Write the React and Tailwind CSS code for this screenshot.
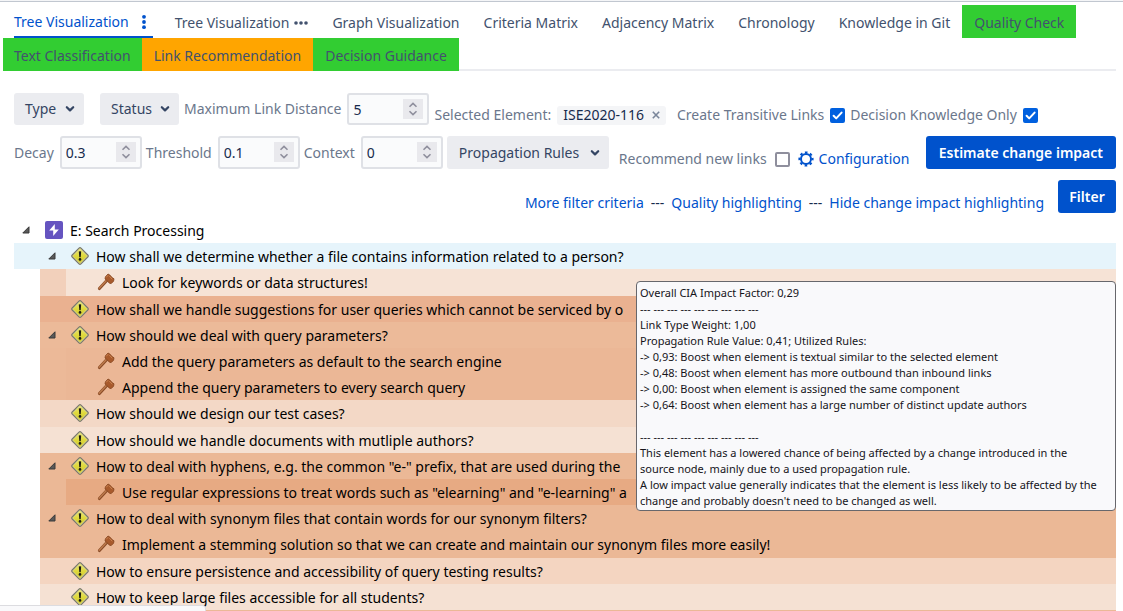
import React from "react";

const ROWS = [
  { text: "How shall we determine whether a file contains information related to a person?", open: true, selected: true },
  { text: "Look for keywords or data structures!", decision: true, outer: "bg-[#f2d0bb]", inner: "bg-[#f6e3d6]" },
  { text: "How shall we handle suggestions for user queries which cannot be serviced by o", outer: "bg-[#eab190]" },
  { text: "How should we deal with query parameters?", open: true, outer: "bg-[#ecba99]" },
  { text: "Add the query parameters as default to the search engine", decision: true, outer: "bg-[#ecb998]", inner: "bg-[#ebb796]" },
  { text: "Append the query parameters to every search query", decision: true, outer: "bg-[#ecb998]", inner: "bg-[#ebb796]" },
  { text: "How should we design our test cases?", outer: "bg-[#f3d8c6]" },
  { text: "How should we handle documents with mutliple authors?", outer: "bg-[#f5e1d3]" },
  { text: 'How to deal with hyphens, e.g. the common "e-" prefix, that are used during the', open: true, outer: "bg-[#ebb896]" },
  { text: 'Use regular expressions to treat words such as "elearning" and "e-learning" a', decision: true, outer: "bg-[#ebb896]", inner: "bg-[#e7aa83]" },
  { text: "How to deal with synonym files that contain words for our synonym filters?", open: true, outer: "bg-[#ebb896]" },
  { text: "Implement a stemming solution so that we can create and maintain our synonym files more easily!", decision: true, outer: "bg-[#ebb896]", inner: "bg-[#ebb896]" },
  { text: "How to ensure persistence and accessibility of query testing results?", outer: "bg-[#f4d5c1]" },
  { text: "How to keep large files accessible for all students?", outer: "bg-[#f5e1d3]" },
];

function Chevron() {
  return (
    <svg className="h-2 w-2.5 shrink-0" viewBox="0 0 10 8" fill="none" stroke="currentColor" strokeWidth="2.2" strokeLinecap="round" strokeLinejoin="round" aria-hidden="true">
      <path d="M1.8 2.2 5 5.4 8.2 2.2" />
    </svg>
  );
}

function Arrow() {
  return (
    <svg className="h-2 w-2 shrink-0" viewBox="0 0 8 8" aria-hidden="true">
      <path d="M7 .8V7H.8Z" fill="#595959" stroke="#3a3a3a" strokeWidth="1" />
    </svg>
  );
}

function IssueIcon() {
  return (
    <svg className="h-[18px] w-[18px] shrink-0" viewBox="0 0 18 18" aria-hidden="true">
      <defs>
        <linearGradient id="issue" x1="0" y1="0" x2="0" y2="1">
          <stop offset="0" stopColor="#ece77a" />
          <stop offset=".5" stopColor="#dfd93c" />
          <stop offset="1" stopColor="#cfc830" />
        </linearGradient>
      </defs>
      <path d="M8 1.2Q9 .2 10 1.2L16.8 8Q17.8 9 16.8 10L10 16.8Q9 17.8 8 16.8L1.2 10Q.2 9 1.2 8Z" fill="#d8d48c" stroke="#77776c" strokeWidth="1.1" />
      <path d="M9 2 16 9 9 16 2 9Z" fill="url(#issue)" />
      <path d="M7.8 4.6Q9 3.8 10.2 4.6L9.7 10.2H8.3Z" fill="#1c1c12" />
      <circle cx="9" cy="12.4" r="1.3" fill="#1c1c12" />
    </svg>
  );
}

function DecisionIcon() {
  return (
    <svg className="h-[18px] w-[18px] shrink-0" viewBox="0 0 18 18" aria-hidden="true">
      <path d="M9.8 7.4 2.4 15.6" stroke="#8a4c28" strokeWidth="3" strokeLinecap="round" />
      <path d="M9.6 7.2 2.2 15.2" stroke="#bd7a4c" strokeWidth="1.4" strokeLinecap="round" />
      <path d="M8.4 3.8 11 1 12.6 1.8 15.4 4.8 17 5.8 16.6 8.2 14.2 10.6 12.4 10.2 9.2 6.8 8 6Z" fill="#a85a2c" stroke="#84451f" strokeWidth=".8" strokeLinejoin="round" />
      <path d="M11 2.4 9.6 4M12.6 3.4 15 6" stroke="#cc8452" strokeWidth="1" strokeLinecap="round" />
    </svg>
  );
}

function EpicIcon() {
  return (
    <svg className="h-[18px] w-[18px] shrink-0" viewBox="0 0 18 18" aria-hidden="true">
      <rect width="18" height="18" rx="2" fill="#6554c0" />
      <path d="M9.8 3 4.2 9.6H8.2V15L13.8 8.4H9.8Z" fill="#fff" />
    </svg>
  );
}

function Gear() {
  return (
    <svg className="h-4 w-4 shrink-0" viewBox="0 0 16 16" fill="none" stroke="currentColor" aria-hidden="true">
      <circle cx="8" cy="8" r="5" strokeWidth="2" />
      <circle cx="8" cy="8" r="6.6" strokeWidth="2" strokeDasharray="2.6 2.584" strokeDashoffset="1.3" />
    </svg>
  );
}

function NumberField({ id, label, value }) {
  return (
    <div className="flex items-center gap-1.5">
      <label htmlFor={id} className="text-[#6b778c]">{label}</label>
      <span className="relative flex h-full w-[82px]">
        <input id={id} type="number" defaultValue={value} className="h-full w-full rounded-[3px] border-2 border-[#dfe1e6] bg-[#fafbfc] pl-1 pr-6 text-[#172b4d] outline-none [appearance:textfield]" />
        <span className="pointer-events-none absolute right-1.5 top-1.5 flex h-5 w-5 items-center justify-center bg-[#e9e9ed]">
          <svg className="h-4 w-3" viewBox="0 0 12 16" fill="none" stroke="#8f8f9d" strokeWidth="1.6" aria-hidden="true">
            <path d="M2.5 5.8 6 2.4 9.5 5.8M2.5 10.2 6 13.6 9.5 10.2" />
          </svg>
        </span>
      </span>
    </div>
  );
}

function Dropdown({ children, className }) {
  return (
    <button type="button" className={`flex items-center justify-between rounded-[3px] bg-[#ebecf0] pr-[9px] text-[#344563] ${className}`}>
      {children}
      <Chevron />
    </button>
  );
}

function CheckField({ id, label, checked, className }) {
  return (
    <div className={`flex items-center self-end ${className}`}>
      <label htmlFor={id} className="text-[#6b778c]">{label}</label>
      <span className="relative flex h-[15px] w-[15px]">
        <input id={id} type="checkbox" defaultChecked={checked} className="peer h-full w-full appearance-none rounded-[2px] border-2 border-[#8f8f9d] bg-white checked:border-[#0060df] checked:bg-[#0060df]" />
        <svg className="pointer-events-none absolute inset-0 hidden h-full w-full peer-checked:block" viewBox="0 0 15 15" fill="none" stroke="#fff" strokeWidth="2" strokeLinecap="round" strokeLinejoin="round" aria-hidden="true">
          <path d="M3.6 7.8 6.2 10.4 11.6 4.6" />
        </svg>
      </span>
    </div>
  );
}

function Tab({ children, className = "px-3 text-[#42526e]" }) {
  return (
    <a href="#" className={`flex h-[33px] items-center whitespace-nowrap pt-0.5 ${className}`}>
      {children}
    </a>
  );
}

function RowText({ children }) {
  return <span className="ml-[7px] whitespace-nowrap pt-0.5">{children}</span>;
}

function TreeRow({ row }) {
  if (row.selected) {
    return (
      <div role="treeitem" className="flex items-center bg-[#e6f4fb] pl-[34px]">
        <Arrow />
        <span className="ml-[15px]"><IssueIcon /></span>
        <RowText>{row.text}</RowText>
      </div>
    );
  }
  if (row.decision) {
    return (
      <div role="treeitem" className={`ml-[26px] flex overflow-hidden pl-[26px] ${row.outer}`}>
        <div className={`flex flex-1 items-center pl-[31px] ${row.inner}`}>
          <DecisionIcon />
          <RowText>{row.text}</RowText>
        </div>
      </div>
    );
  }
  return (
    <div role="treeitem" className={`ml-[26px] flex items-center overflow-hidden pl-2 ${row.outer}`}>
      <span className="w-2">{row.open && <Arrow />}</span>
      <span className="ml-[15px]"><IssueIcon /></span>
      <RowText>{row.text}</RowText>
    </div>
  );
}

function Tooltip() {
  return (
    <div role="tooltip" className="absolute right-0 top-[64px] w-[480px] rounded border border-[#67676c] bg-[#f9f9fb] pb-px pl-[3px] pt-[3px] text-[11px] leading-4 text-[#15141a]">
      <p>Overall CIA Impact Factor: 0,29</p>
      <p>--- --- --- --- --- --- --- --- ---</p>
      <p>Link Type Weight: 1,00</p>
      <p>Propagation Rule Value: 0,41; Utilized Rules:</p>
      <p>-&gt; 0,93: Boost when element is textual similar to the selected element</p>
      <p>-&gt; 0,48: Boost when element has more outbound than inbound links</p>
      <p>-&gt; 0,00: Boost when element is assigned the same component</p>
      <p>-&gt; 0,64: Boost when element has a large number of distinct update authors</p>
      <p className="mt-4">--- --- --- --- --- --- --- --- ---</p>
      <p>This element has a lowered chance of being affected by a change introduced in the<br />source node, mainly due to a used propagation rule.</p>
      <p className="whitespace-nowrap">A low impact value generally indicates that the element is less likely to be affected by the<br />change and probably doesn't need to be changed as well.</p>
    </div>
  );
}

export default function App() {
  return (
    <div className="h-screen overflow-hidden bg-white font-['Noto_Sans','Open_Sans',sans-serif] text-sm leading-5 text-black">
      <div className="h-0.5 border-b border-[#c1c7d0] bg-[#f4f5f7]" />
      <nav className="ml-[3px] mr-[7px] mt-[3px] flex flex-wrap border-b-2 border-[#ebecf0]">
        <Tab className="mx-[11px] border-b-2 border-[#0052cc] text-[#0052cc]">
          Tree Visualization
          <svg className="ml-2 h-4 w-4" viewBox="0 0 16 16" fill="currentColor" aria-hidden="true">
            <circle cx="7" cy="2.8" r="1.9" /><circle cx="7" cy="8" r="1.9" /><circle cx="7" cy="13.2" r="1.9" />
          </svg>
        </Tab>
        <Tab className="px-[11px] text-[#42526e]">
          Tree Visualization
          <svg className="ml-1 h-4 w-4" viewBox="0 0 16 16" fill="currentColor" aria-hidden="true">
            <circle cx="3" cy="8" r="1.8" /><circle cx="8" cy="8" r="1.8" /><circle cx="13" cy="8" r="1.8" />
          </svg>
        </Tab>
        <Tab>Graph Visualization</Tab>
        <Tab>Criteria Matrix</Tab>
        <Tab>Adjacency Matrix</Tab>
        <Tab>Chronology</Tab>
        <Tab>Knowledge in Git</Tab>
        <Tab className="bg-[#32cd32] px-3 text-[#42526e]">Quality Check</Tab>
        <div className="-mb-0.5 flex basis-full">
          <Tab className="bg-[#32cd32] px-[11px] text-[#42526e]">Text Classification</Tab>
          <Tab className="bg-[#ffa500] px-3 text-[#42526e]">Link Recommendation</Tab>
          <Tab className="bg-[#32cd32] px-3 text-[#42526e]">Decision Guidance</Tab>
        </div>
      </nav>

      <main className="ml-[14px] mr-[7px]">
        <form className="flex flex-col gap-[11px] pt-[22px]">
          <div className="flex h-8 whitespace-nowrap">
            <Dropdown className="mr-4 w-[70px] pl-[11px]">Type</Dropdown>
            <Dropdown className="mr-[5px] w-[79px] pl-[11px]">Status</Dropdown>
            <NumberField id="distance" label="Maximum Link Distance" value="5" />
            <div className="ml-[5px] flex items-center gap-1.5 self-end text-[#6b778c]">
              Selected Element:
              <span className="flex h-[19px] items-center gap-2 rounded-[3px] bg-[#f4f5f7] px-1.5 text-[#172b4d]">
                ISE2020-116
                <button type="button" aria-label="Remove ISE2020-116" className="text-[#7a869a]">
                  <svg className="h-2 w-2" viewBox="0 0 8 8" stroke="currentColor" strokeWidth="1.6" aria-hidden="true"><path d="M.8.8 7.2 7.2M7.2.8.8 7.2" /></svg>
                </button>
              </span>
            </div>
            <CheckField id="transitive" label="Create Transitive Links" checked className="ml-[11px] gap-1.5" />
            <CheckField id="knowledge" label="Decision Knowledge Only" checked className="ml-[5px] gap-1.5" />
          </div>
          <div className="flex h-[33px] gap-1 whitespace-nowrap">
            <NumberField id="decay" label="Decay" value="0.3" />
            <NumberField id="threshold" label="Threshold" value="0.1" />
            <NumberField id="context" label="Context" value="0" />
            <Dropdown className="w-[162px] pl-3">Propagation Rules</Dropdown>
            <CheckField id="recommend" label="Recommend new links" className="ml-1.5 gap-2" />
            <a href="#" className="ml-1 flex items-center gap-[5px] self-end text-[#0052cc]"><Gear />Configuration</a>
            <button type="button" className="ml-auto rounded-[3px] bg-[#0052cc] px-[13px] font-semibold text-white">Estimate change impact</button>
          </div>
          <div className="flex h-[33px] justify-end whitespace-nowrap">
            <p className="flex gap-[7px] self-end text-[#172b4d]">
              <a href="#" className="text-[#0052cc]">More filter criteria</a>
              <span>---</span>
              <a href="#" className="text-[#0052cc]">Quality highlighting</a>
              <span>---</span>
              <a href="#" className="text-[#0052cc]">Hide change impact highlighting</a>
            </p>
            <button type="button" className="ml-[14px] w-[58px] rounded-[3px] bg-[#0052cc] font-semibold text-white">Filter</button>
          </div>
        </form>

        <div className="relative mt-1">
          <div role="tree" className="grid h-[393px] auto-rows-fr">
            <div role="treeitem" className="flex items-center pl-2">
              <Arrow />
              <span className="ml-[15px]"><EpicIcon /></span>
              <RowText>E: Search Processing</RowText>
            </div>
            {ROWS.map((row) => <TreeRow key={row.text} row={row} />)}
          </div>
          <div className="ml-[26px] h-6 bg-[#ebb896]" />
          <Tooltip />
        </div>
      </main>
      <div className="fixed bottom-0 left-0 h-1.5 w-[206px] rounded-tr-sm border-r border-t border-[#dcdce0] bg-[#f9f9fb]" />
    </div>
  );
}
